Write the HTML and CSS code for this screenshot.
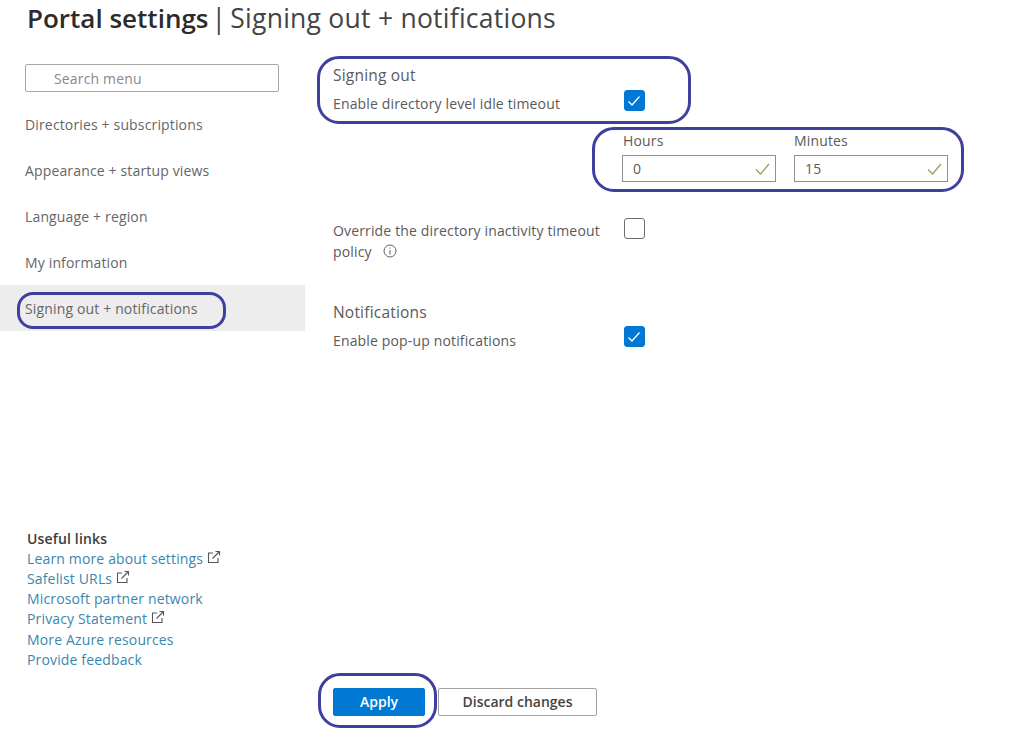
FILE: index.html
```html
<!DOCTYPE html>
<html lang="en">
<head>
<meta charset="UTF-8" />
<meta name="viewport" content="width=device-width, initial-scale=1" />
<title>Portal settings | Signing out + notifications</title>
<link rel="stylesheet" href="styles.css">
</head>
<body>
<div class="page">
    <header class="page-header">
        <h1><b>Portal settings</b><span>|</span><span class="title-sub">Signing out + notifications</span></h1>
    </header>
    <div class="layout">
        <aside class="sidebar">
            <input class="search" type="text" placeholder="Search menu" />
            <nav class="menu">
                <a class="menu-item" href="#">Directories + subscriptions</a>
                <a class="menu-item" href="#">Appearance + startup views</a>
                <a class="menu-item" href="#">Language + region</a>
                <a class="menu-item" href="#">My information</a>
                <a class="menu-item selected" href="#"><span class="ring ring-menu"></span>Signing out + notifications</a>
            </nav>
            <div class="links">
                <div class="links-title">Useful links</div>
                <a href="#">Learn more about settings <svg class="ext" viewBox="0 0 14 14"><path d="M6 3H1.5v9.5H11V8M5.5 8.5l7-7M8.5 1.5h4v4" /></svg></a>
                <a href="#">Safelist URLs <svg class="ext" viewBox="0 0 14 14"><path d="M6 3H1.5v9.5H11V8M5.5 8.5l7-7M8.5 1.5h4v4" /></svg></a>
                <a href="#">Microsoft partner network</a>
                <a href="#">Privacy Statement <svg class="ext" viewBox="0 0 14 14"><path d="M6 3H1.5v9.5H11V8M5.5 8.5l7-7M8.5 1.5h4v4" /></svg></a>
                <a href="#">More Azure resources</a>
                <a href="#">Provide feedback</a>
            </div>
        </aside>
        <main class="content">
            <section class="idle">
                <span class="ring ring-idle"></span>
                <h2>Signing out</h2>
                <div class="row">
                    <label class="row-label">Enable directory level idle timeout</label>
                    <span class="check on"><svg viewBox="0 0 19 19"><path d="M3.5 10.5L7 14l7.5-8.5" /></svg></span>
                </div>
            </section>
            <div class="timeout">
                <span class="ring ring-time"></span>
                <div class="field">
                    <label>Hours</label>
                    <div class="input">0<svg class="valid" viewBox="0 0 15 12"><path d="M1 6.5l4.5 4.5L14 1" /></svg></div>
                </div>
                <div class="field">
                    <label>Minutes</label>
                    <div class="input">15<svg class="valid" viewBox="0 0 15 12"><path d="M1 6.5l4.5 4.5L14 1" /></svg></div>
                </div>
            </div>
            <div class="row override">
                <label class="row-label">Override the directory inactivity timeout policy <svg class="info" viewBox="0 0 14 14"><circle cx="7" cy="7" r="6" /><path d="M7 6v4.5M7 3.5v1.2" /></svg></label>
                <span class="check"></span>
            </div>
            <section class="notify">
                <h2>Notifications</h2>
                <div class="row">
                    <label class="row-label">Enable pop-up notifications</label>
                    <span class="check on"><svg viewBox="0 0 19 19"><path d="M3.5 10.5L7 14l7.5-8.5" /></svg></span>
                </div>
            </section>
            <div class="actions">
                <button class="btn primary"><span class="ring ring-apply"></span>Apply</button>
                <button class="btn">Discard changes</button>
            </div>
        </main>
    </div>
</div>
</body>
</html>
```

FILE: styles.css
```css
* {
    box-sizing: border-box;
}
body {
    margin: 0;
    font-family: "Open Sans", "Liberation Sans", sans-serif;
    font-size: 14px;
    letter-spacing: 0.15px;
    background-color: #fff;
    color: #5a5a5a;
}
.page {
    width: 1024px;
    height: 732px;
    display: flex;
    flex-direction: column;
    overflow: hidden;
}
.page-header {
    height: 64px;
    padding-left: 27px;
    flex-shrink: 0;
}
h1 {
    display: flex;
    align-items: baseline;
    gap: 3px;
    margin: 0;
    font-size: 26.5px;
    line-height: 36px;
    font-weight: 400;
    letter-spacing: 0.25px;
    color: #444;
    white-space: nowrap;
}
h1 b {
    font-size: 26px;
    font-weight: 600;
    letter-spacing: 0;
    color: #2b2b2b;
}
.title-sub {
    margin-left: 1px;
}
.layout {
    flex: 1;
    display: flex;
    min-height: 0;
}
.sidebar {
    width: 305px;
    display: flex;
    flex-direction: column;
}
.search {
    display: block;
    width: 254px;
    height: 28px;
    margin-left: 25px;
    padding: 0 0 0 28px;
    border: 1px solid #a8a8a8;
    border-radius: 2px;
    font: inherit;
    letter-spacing: inherit;
}
.search::placeholder {
    color: #8a8a8a;
    opacity: 1;
}
.menu {
    display: flex;
    flex-direction: column;
    margin-top: 9px;
}
.menu-item {
    position: relative;
    height: 46px;
    padding-left: 25px;
    line-height: 47px;
    color: #666;
    text-decoration: none;
}
.selected {
    background-color: #ededed;
}
.links {
    margin-top: auto;
    margin-bottom: 62px;
    padding-left: 27px;
    display: flex;
    flex-direction: column;
    line-height: 20.2px;
}
.links-title {
    font-weight: 600;
    color: #3c3c3c;
}
.links a {
    color: #3a87ad;
    text-decoration: none;
}
.ext {
    width: 14px;
    height: 14px;
    vertical-align: 0;
    fill: none;
    stroke: #555;
    stroke-width: 1.1;
}
.content {
    flex: 1;
    padding-left: 28px;
    display: flex;
    flex-direction: column;
}
.idle,
.timeout,
.notify {
    position: relative;
}
h2 {
    margin: 0;
    font-size: 15.5px;
    line-height: 23px;
    font-weight: 400;
    letter-spacing: 0.2px;
    color: #5a5a5a;
}
.row {
    display: flex;
    align-items: flex-start;
    margin-top: 3px;
}
.row-label {
    width: 291px;
    padding-top: 4px;
    line-height: 20px;
}
.check {
    width: 21px;
    height: 21px;
    flex-shrink: 0;
    border: 1px solid #6e6e6e;
    border-radius: 3px;
}
.check.on {
    background-color: #0078d4;
    border-color: #0078d4;
}
.check svg {
    display: block;
    width: 19px;
    height: 19px;
    fill: none;
    stroke: #fff;
    stroke-width: 1.3;
}
.timeout {
    display: flex;
    gap: 18px;
    margin-top: 17px;
    padding-left: 289px;
}
.field {
    width: 154px;
}
.field label {
    display: block;
    padding-left: 1px;
    line-height: 20px;
}
.field + .field label {
    padding-left: 0;
}
.input {
    position: relative;
    height: 27px;
    margin-top: 4px;
    padding-left: 10px;
    border: 1px solid #8f8f8f;
    line-height: 25px;
}
.valid {
    position: absolute;
    top: 7px;
    right: 5px;
    width: 15px;
    height: 12px;
    fill: none;
    stroke: #8ea65a;
    stroke-width: 1.3;
}
.override {
    margin-top: 36px;
}
.override .row-label {
    padding-top: 2px;
    padding-right: 20px;
    line-height: 21px;
}
.info {
    width: 14px;
    height: 14px;
    margin-left: 8px;
    vertical-align: -1px;
    fill: none;
    stroke: #606060;
}
.notify {
    margin-top: 39px;
}
.notify .row {
    margin-top: 2px;
}
.notify .row-label {
    padding-top: 5px;
}
.actions {
    display: flex;
    gap: 13px;
    margin-top: auto;
    margin-bottom: 16px;
}
.btn {
    position: relative;
    width: 159px;
    height: 28px;
    padding: 0 0 2px;
    border: 1px solid #a0a0a0;
    border-radius: 2px;
    background-color: #fff;
    font: inherit;
    font-weight: 600;
    letter-spacing: 0;
    color: #444;
}
.btn.primary {
    width: 92px;
    background-color: #0078d4;
    border-color: #0078d4;
    color: #fff;
}
/* hand drawn marks put over the screenshot */
.ring {
    position: absolute;
    border: 3px solid #3f3f9f;
    border-radius: 22px;
    pointer-events: none;
}
.ring-menu {
    left: 17px;
    top: 7px;
    width: 209px;
    height: 37px;
    border-radius: 16px;
}
.ring-idle {
    left: -16px;
    top: -8px;
    width: 374px;
    height: 68px;
}
.ring-time {
    left: 259px;
    top: -4px;
    width: 372px;
    height: 65px;
}
.ring-apply {
    left: -16px;
    top: -16px;
    width: 119px;
    height: 55px;
}
```
